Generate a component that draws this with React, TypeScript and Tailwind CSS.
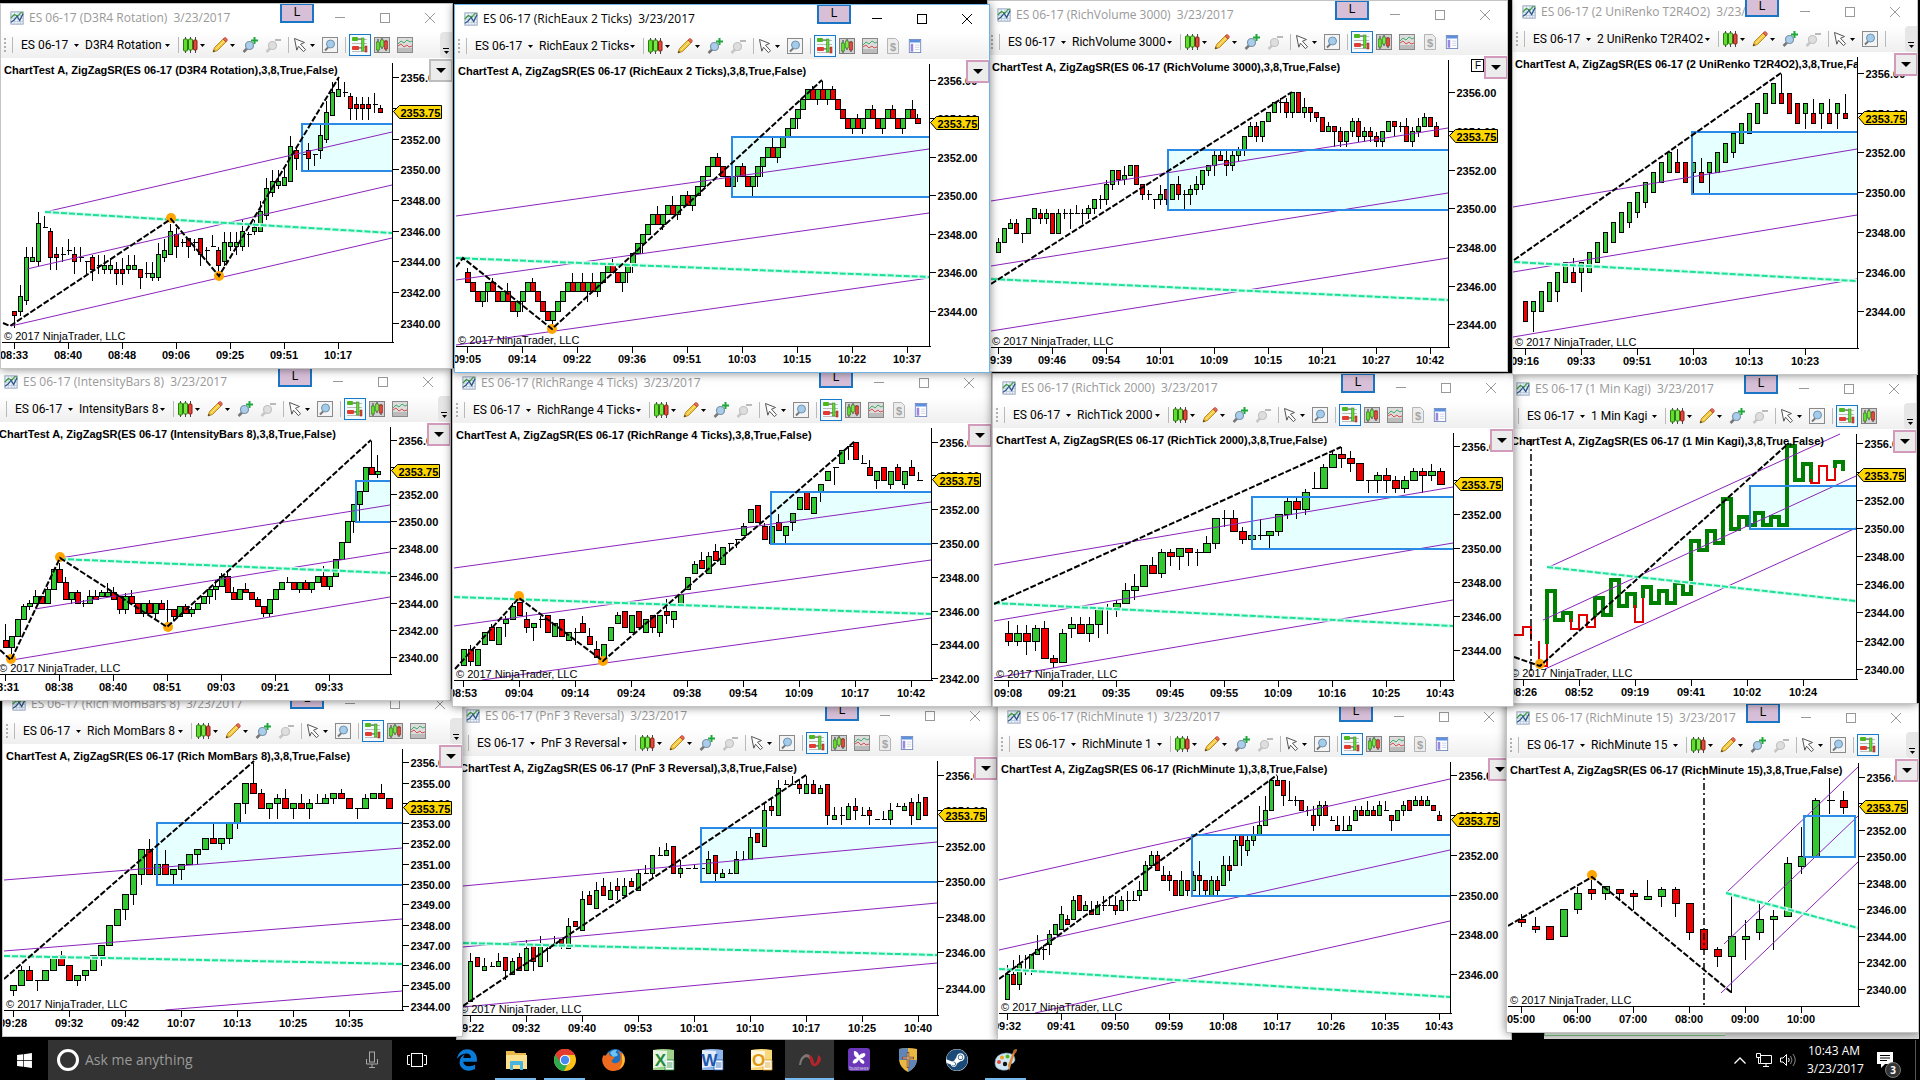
import type { ReactNode } from "react";
import { FaEdgeLegacy, FaSteam, FaWindows } from "react-icons/fa";

type Line = [number, number, number, number];
type Point = [number, number];

interface Kagi {
  up: boolean;
  col: number;
  levels: number[];
}

interface ChartWindow {
  name: string;
  labelWidth: number;
  left: number;
  top: number;
  right: number;
  bottom: number;
  z: number;
  active?: boolean;
  fixed?: boolean;
  overflow?: boolean;
  tools: number;
  // plot area, all in desktop pixels
  plotLeft: number;
  axisX: number;
  axisY: number;
  captionX: number;
  // y of price 2340 and height of one point
  baseY: number;
  point: number;
  prices: number[];
  x0: number;
  step: number;
  every: number;
  body: number;
  times: string[];
  bars: string;
  kagi?: Kagi[];
  trend: Line[];
  mid: Line;
  zigzag: Point[];
  dots: Point[];
  zone: Line;
  zoneClosed?: boolean;
  session?: number;
}

const EVEN = [2356, 2354, 2352, 2350, 2348, 2346, 2344];

// Bars are written in ticks above 2340: "open close hHigh lLow", a single number is a doji.
const WINDOWS: ChartWindow[] = [
  {
    name: "D3R4 Rotation", labelWidth: 75, left: 0, top: 3, right: 453, bottom: 369, z: 8, tools: 3, overflow: true,
    plotLeft: 2, axisX: 392, axisY: 342, captionX: 4, baseY: 322.7, point: 15.35, prices: [...EVEN, 2342, 2340],
    x0: 14, step: 6, every: 9, body: 5,
    times: ["08:33", "08:40", "08:48", "09:06", "09:25", "09:51", "10:17"],
    bars: "3 2 l-1, 3 7 h10 l2, 6 17 h20 l5, 16 17 h20, 16 26 h29 l15, 25 h28, 24 17 h25 l14, 18 17 h20 l14, 18 h20 l16, 19 h22 l18, 18 16 h20 l13, 17 h20 l16, 16 l13, 17 14 h18 l11, 15 h18 l13, 14 15 h18 l13, 14 15 h17 l13, 14 13 h16 l10, 14 13 h17 l10, 14 15 h18 l13, 14 15 h18, 14 12 l9, 13 h16 l12, 12 13 h16 l11, 12 18 h21 l11, 17 19 h22 l16, 18 24 h26, 23 20 h25 l17, 21 h22 l20, 22 20 l17, 21 h22 l19, 22 18 l15, 19 h20 l16, 20 h23, 19 15 h20 l12, 16 21 h24 l15, 20 21 h24 l19, 20 21 h24 l18, 20 24 h27 l19, 23 h24 l20, 24 25 h27 l23, 24 29 h32, 28 35 h38 l27, 34 37 h40 l33, 36 37 h40 l35, 36 38 h41, 37 46 h49, 45 43 h46 l40, 44 h46, 45 43 h47 l40, 44 l41, 45 49 h52 l43, 48 55 h58 l47, 54 60 h63, 59 61 h64, 60 h63 l59, 59 56 h60 l53, 57 56 h59 l53, 57 56 h59 l53, 57 56 h59 l53, 57 h60 l55, 56 55 h57",
    trend: [[45, 212, 392, 132], [27, 269, 392, 185], [11, 326, 392, 238]],
    mid: [45, 212, 392, 233],
    zigzag: [[3, 323], [10, 326], [171, 219], [219, 276], [339, 77]],
    dots: [[171, 218], [219, 276]], zone: [302, 124, 392, 171],
  },
  {
    name: "RichEaux 2 Ticks", labelWidth: 86, left: 454, top: 4, right: 990, bottom: 373, z: 9, active: true, tools: 5,
    plotLeft: 456, axisX: 929, axisY: 346, captionX: 458, baseY: 387.7, point: 19.25, prices: EVEN,
    x0: 467, step: 5, every: 11, body: 6,
    times: ["09:05", "09:14", "09:22", "09:36", "09:51", "10:03", "10:15", "10:22", "10:37"],
    bars: "24 22 h25, 22 20, 20 18, 18 20 l17, 20 22 l18, 22 20 h23, 20 18, 18 20, 20 18 h22, 18 16, 16 18 l15, 18 20 l16, 20 22, 22 20 h23, 20 18, 18 16, 16 14, 14 16 l13, 16 18, 18 20, 20 22, 22 20 h24, 20 22, 22 20 h24, 20 22 l18, 22 20 h24, 20 22 l19, 22 24, 24 26, 26 24 h27, 24 22, 22 24 l20, 24 26 l22, 26 28 l24, 28 30, 30 32 l28, 32 34, 34 36, 36 34 h38, 34 36 l33, 36 38, 38 36 h40, 36 38 l35, 38 40, 40 38 h41, 38 40 l37, 40 42, 42 44, 44 46, 46 48, 48 46 h49, 46 44, 44 42, 42 44, 44 46 l43, 46 44 h47, 44 42, 42 44 l40, 44 46 l42, 46 48 l44, 48 50, 50 48 h52, 48 50 l47, 50 52, 52 54, 54 56, 56 58 l54, 58 60, 60 62, 62 60 h63, 60 62 l59, 62 60 h64, 60 62 l59, 62 60 h63, 60 58, 58 56, 56 54, 54 56 l53, 56 54 h57, 54 56 l53, 56 58, 58 56 h59, 56 54, 54 56 l53, 56 58, 58 56 h59, 56 54, 54 56 l53, 56 58, 58 56 h60, 56 55 h57",
    trend: [[456, 216, 929, 149], [456, 280, 929, 213], [456, 345, 929, 278]],
    mid: [456, 258, 929, 277],
    zigzag: [[456, 267], [463, 258], [552, 329], [822, 80]],
    dots: [[552, 329]], zone: [732, 137, 929, 197],
  },
  {
    name: "RichVolume 3000", labelWidth: 90, left: 987, top: 0, right: 1508, bottom: 372, z: 7, tools: 5, fixed: true,
    plotLeft: 991, axisX: 1448, axisY: 347, captionX: 992, baseY: 401.7, point: 19.33, prices: EVEN,
    x0: 998, step: 6, every: 9, body: 5,
    times: ["09:39", "09:46", "09:54", "10:01", "10:09", "10:15", "10:21", "10:27", "10:42"],
    bars: "31 33 h34, 33 36, 36 37 h38, 37 35 h38, 35 l33, 35 38, 38 40, 39 38 h40 l37, 38 39 h40 l37, 39 35, 35 39 h40, 39 h40 l38, 39 h40 l36, 39 h41, 39 h40 l37, 39 40 h41 l38, 40 42 l39, 42 h43 l40, 42 45 h46 l41, 45 48 l44, 48 46 l45, 46 47 h49 l45, 47 49, 49 45, 45 43 l42, 43 h44 l42, 42 l40, 42 43 h45 l41, 44 42 l41, 42 45, 45 43 h47 l42, 43 h44 l40, 43 44 h45 l41, 44 45 h47 l43, 45 48 l44, 48 49 l47, 49 51 h52 l47, 51 50 h52, 50 49 h52 l47, 49 51 h52 l48, 51 52 h53 l50, 52 55 l51, 55 57 h58, 57 55 h58 l54, 55 58 l54, 58 60, 60 62, 62 h63 l60, 62 60 h63 l59, 60 64 l59, 64 60, 60 61 h63 l59, 61 60 l58, 60 59 l58, 59 56, 56 57 h58, 57 56 l53, 56 54 h57 l53, 54 56 l53, 56 58 h59 l55, 58 55 h59 l54, 55 56 h57 l54, 56 55 h57 l54, 55 54 h56 l53, 54 56 l53, 56 58, 58 57 l55, 57 h58 l56, 57 54 h59, 54 56 h57 l53, 56 57 h59 l55, 57 59 h60, 59 57, 57 55 h58",
    trend: [[991, 201, 1448, 128], [991, 266, 1448, 193], [991, 331, 1448, 258]],
    mid: [991, 279, 1448, 300],
    zigzag: [[991, 284], [1292, 92]],
    dots: [], zone: [1168, 150, 1448, 210],
  },
  {
    name: "2 UniRenko T2R4O2", labelWidth: 103, left: 1512, top: -3, right: 1918, bottom: 375, z: 6, tools: 0, overflow: true,
    plotLeft: 1513, axisX: 1857, axisY: 348, captionX: 1515, baseY: 390.7, point: 19.85, prices: EVEN,
    x0: 1525, step: 8, every: 7, body: 5,
    times: ["09:16", "09:33", "09:51", "10:03", "10:13", "10:23"],
    bars: "18 14, 16 18 l12, 16 20, 18 22, 20 24 l18, 22 26, 24 22 h27, 24 26 l20, 24 28, 26 30, 28 32, 30 34, 32 36, 34 38 l33, 36 40 l35, 38 42 l37, 40 44, 42 46, 44 48, 46 44 h49, 46 42, 44 46 l40, 44 42 h47, 44 46 l40, 44 48, 46 50, 48 52 l47, 50 54, 52 56, 54 58, 56 60, 58 62, 60 58 h64, 60 56, 58 54, 56 58 l53, 56 54 h59, 56 58 l53, 56 54 h59, 56 58 l53, 56 55 h60",
    trend: [[1513, 207, 1857, 149], [1513, 272, 1857, 215], [1513, 337, 1857, 279]],
    mid: [1514, 262, 1857, 281],
    zigzag: [[1514, 260], [1781, 73]],
    dots: [], zone: [1692, 132, 1857, 194],
  },
  {
    name: "IntensityBars 8", labelWidth: 76, left: -6, top: 367, right: 451, bottom: 701, z: 4, tools: 3, overflow: true,
    plotLeft: 0, axisX: 390, axisY: 674, captionX: -1, baseY: 656.7, point: 13.53, prices: [...EVEN, 2342, 2340],
    x0: 5, step: 6, every: 9, body: 6,
    times: ["08:31", "08:38", "08:40", "08:51", "09:03", "09:21", "09:33"],
    bars: "5 3 h10, 3 6 l1, 6 11, 11 15 h16, 15 16 h17 l14, 16 18 h20, 18 16, 16 20 h21, 20 26, 26 22 h28, 22 17 h24, 17 19 l16, 19 16 h20, 16 h17 l15, 16 18 h20, 18 17 h20, 18 19 h20, 18 19 h22, 19 17 h21, 18 14 l13, 14 18 h19 l13, 18 16 h20, 16 13, 13 16 l12, 16 13 h17, 13 16 l11, 16 14 h17, 14 h17 l10, 14 12 l11, 12 15, 15 13 h16, 13 14 h15 l12, 14 16, 16 18, 18 20 l16, 20 21 h23 l17, 21 24 h25, 24 19 h26, 19 17 h21, 17 20, 20 19 h22, 19 17, 17 15 h18, 15 13 l12, 13 17 l12, 17 20, 20 22, 22 h24, 22 20, 20 22 l19, 22 20 h23, 20 22 l19, 22 24, 24 21 h27, 21 24 l20, 24 29, 29 34, 34 40, 40 45 l37, 45 49 l40, 49 56, 56 54 h64, 54 55 h60 l53",
    trend: [[60, 558, 390, 505], [35, 609, 390, 552], [12, 660, 390, 597]],
    mid: [60, 559, 390, 573],
    zigzag: [[0, 650], [11, 660], [60, 558], [167, 627], [371, 440]],
    dots: [[11, 659], [60, 557], [168, 627]], zone: [356, 481, 390, 522],
  },
  {
    name: "RichRange 4 Ticks", labelWidth: 94, left: 452, top: 368, right: 992, bottom: 707, z: 5, tools: 5,
    plotLeft: 454, axisX: 931, axisY: 680, captionX: 456, baseY: 711.8, point: 16.88, prices: [...EVEN, 2342],
    x0: 463, step: 7, every: 8, body: 6,
    times: ["08:53", "09:04", "09:14", "09:24", "09:38", "09:54", "10:09", "10:17", "10:42"],
    bars: "11 15, 15 12 h16 l11, 11 15, 16 19, 20 17 h21, 16 20, 21 22 h23 l18, 22 25 h26, 26 23, 22 20 h24 l19, 20 21 l17, 22 h23 l20, 23 19, 18 21, 22 18, 17 19, 19 h20 l16, 21 19 h23, 18 16 h20, 15 13 h17, 13 16 l12, 17 20, 21 23 h24, 24 20, 19 23, 24 20, 19 22, 23 20 l19, 19 23 l18, 24 23 h27 l21, 22 24 l20, 25 28, 29 32, 33 35 h36, 36 34 h38, 33 37 h38, 38 36 h40, 35 39, 40 l38, 41 l39, 42 44 h45, 45 48, 49 45, 44 41 h45, 40 44, 45 43 h47, 42 44 l40, 45 47 l43, 48 51, 52 48, 47 51, 52 54 l50, 55 57, 58 l54, 59 62, 63 l60, 64 60, 59 h61, 58 56 h60, 55 57 l53, 58 55, 54 57 l53, 58 55 h59, 54 57 l53, 58 56 h60, 55 h57",
    trend: [[454, 568, 931, 502], [454, 626, 931, 560], [482, 680, 931, 618]],
    mid: [454, 597, 931, 614],
    zigzag: [[455, 669], [519, 598], [603, 661], [855, 441]],
    dots: [[519, 596], [603, 661]], zone: [771, 492, 931, 544],
  },
  {
    name: "RichTick 2000", labelWidth: 73, left: 992, top: 373, right: 1514, bottom: 707, z: 5, tools: 5,
    plotLeft: 994, axisX: 1453, axisY: 680, captionX: 996, baseY: 717.7, point: 17, prices: EVEN,
    x0: 1008, step: 9, every: 6, body: 8,
    times: ["09:08", "09:21", "09:35", "09:45", "09:55", "10:09", "10:16", "10:25", "10:43"],
    bars: "20 18 h23 l17, 18 20 h22 l17, 20 18 h22 l15, 18 21 h22 l16, 21 14 h23, 14 13 h15 l12, 13 20 h21, 21 22 h24 l19, 22 20 h24, 20 22 h24 l18, 22 26 l19, 26 h27 l20, 26 27 h28 l24, 27 30 h32, 30 31 h34 l28, 31 36, 36 34 h38, 34 39 h40 l33, 39 38 h40 l36, 38 40 l35, 40 39 l36, 39 h40 l36, 39 41 h43, 41 47 l40, 47 h49 l45, 47 44 h49, 44 42 h45 l41, 42 43 h45, 43 h47 l42, 43 44 l40, 44 48 l43, 48 51 h52 l47, 51 49 h52 l47, 49 53 h54 l48, 54 h58, 54 59 h60, 59 62 h63, 62 61 h64 l59, 61 60 h63 l58, 60 56, 56 l53, 56 57 h58 l53, 57 56 h59 l53, 56 54 h57 l53, 54 56 h57 l53, 56 58 h59, 58 57 h59 l53, 57 58 h60 l56, 58 55 h59",
    trend: [[994, 565, 1453, 487], [994, 621, 1453, 543], [994, 678, 1453, 600]],
    mid: [994, 603, 1453, 626],
    zigzag: [[994, 604], [1341, 447]],
    dots: [], zone: [1252, 497, 1453, 549],
  },
  {
    name: "1 Min Kagi", labelWidth: 56, left: 1506, top: 374, right: 1917, bottom: 704, z: 4, tools: 2, overflow: true,
    plotLeft: 1514, axisX: 1856, axisY: 679, captionX: 1511, baseY: 668.7, point: 14.08, prices: [...EVEN, 2342, 2340],
    x0: 1523, step: 8, every: 7, body: 5,
    times: ["08:26", "08:52", "09:19", "09:41", "10:02", "10:24"],
    bars: "",
    kagi: [
      { up: false, col: -1, levels: [10, 10, 12, 9] },
      { up: false, col: 2, levels: [8, 1, 8] },
      { up: true, col: 3, levels: [8, 22.5, 14, 16, 14] },
      { up: false, col: 6, levels: [14, 11.5, 15.5, 12, 15.5] },
      { up: true, col: 9, levels: [15.5, 20.5, 15.5, 25.5, 18, 21.5, 18] },
      { up: false, col: 14, levels: [18, 13.5, 21] },
      { up: true, col: 15, levels: [21, 23.5, 19, 22.5, 19, 24.5, 21.5, 36.5, 34, 39.5, 36, 48.5, 40, 43.5, 41, 44.5, 41, 43.5, 41, 63.5, 54, 58.5, 54] },
      { up: false, col: 36, levels: [54, 53, 58, 54, 58] },
      { up: true, col: 39, levels: [58, 59, 57] },
    ],
    trend: [[1549, 567, 1840, 434], [1543, 620, 1856, 476], [1545, 669, 1856, 528]],
    mid: [1547, 567, 1856, 601],
    zigzag: [[1514, 657], [1540, 666], [1789, 443]],
    dots: [[1540, 664]], zone: [1750, 486, 1856, 529], session: 1531,
  },
  {
    name: "Rich MomBars 8", labelWidth: 86, left: 2, top: 689, right: 463, bottom: 1037, z: 3, tools: 3, overflow: true,
    plotLeft: 4, axisX: 402, axisY: 1010, captionX: 6, baseY: 1086.7, point: 20.27,
    prices: [2356, 2355, 2354, 2353, 2352, 2351, 2350, 2349, 2348, 2347, 2346, 2345, 2344],
    x0: 13, step: 8, every: 7, body: 7,
    times: ["09:28", "09:32", "09:42", "10:07", "10:13", "10:25", "10:35"],
    bars: "19 20 l18, 20 23 h24, 23 21 h24, 21 l19, 21 23, 23 26, 26 24 h27, 24 21, 21 22 l20, 22 23 l21, 23 26, 26 28 l24, 28 32, 32 35, 35 38 l33, 38 42 l36, 42 47 l40, 47 42 h49, 42 44, 44 42 h47, 42 43 l40, 43 44 l41, 44 46, 46 47 l44, 47 49, 49 48 h52, 48 49 l47, 49 52 l48, 52 56 l51, 56 60 l54, 60 58 h64, 58 55 h59, 55 56 l53, 56 57 h58 l53, 57 55 h59, 55 56 l53, 56 55 h58, 55 56 h57 l53, 56 h58, 56 57 h58, 57 58 l56, 58 57 h59, 57 55, 55 l53, 55 57 h58, 57 58, 58 57 h60, 57 55",
    trend: [[4, 880, 402, 848], [4, 951, 402, 919], [165, 1010, 402, 991]],
    mid: [4, 956, 402, 964],
    zigzag: [[4, 979], [254, 761]],
    dots: [], zone: [157, 823, 402, 885],
  },
  {
    name: "PnF 3 Reversal", labelWidth: 76, left: 456, top: 701, right: 998, bottom: 1040, z: 1, tools: 5,
    plotLeft: 463, axisX: 937, axisY: 1015, captionX: 460, baseY: 1058.7, point: 17.73, prices: EVEN,
    x0: 470, step: 7, every: 8, body: 5,
    times: ["09:22", "09:32", "09:40", "09:53", "10:01", "10:10", "10:17", "10:25", "10:40"],
    bars: "13 22 h24, 23 21, 20 21 h23, 21 h22, 21 22 h24, 23 20 l18, 19 22 h23, 23 20 h24, 20 25 h27, 26 22 l20, 21 26 h28, 25 h26 l22, 26 h28, 27 26 l25, 25 30 h32, 31 30, 29 36 h38, 37 35 h38, 34 38 h40, 39 37 h41, 36 38 h40, 39 38 h41 l36, 37 39 h41, 40 39 h41, 38 42 h43, 42 h44, 42 46 l41, 46 h48, 46 47 h49, 48 42, 42 43 h45 l41, 43, 43 h44, 43 h44, 42 45 h47, 46 42 l40, 41 42 h43, 42 h43, 42 45 h47, 45 h47, 45 50 h52, 51 49, 48 56 h58, 57 56 h59 l55, 55 61 h63, 62 h63, 62 h64, 62 61 h63 l60, 60 62 h64, 62 60 h63, 60 61 h62, 62 55 l53, 54 55 h57, 55 h57 l53, 54 57 h58, 57 56 h59 l54, 55 h57, 56 55 h57 l53, 54, 54 h56, 54 56 h58 l53, 57 h58, 56 57 h58, 58 55 h59 l53, 54 58 h60, 59 55",
    trend: [[463, 886, 937, 842], [463, 947, 937, 903], [463, 1007, 937, 963]],
    mid: [463, 943, 937, 955],
    zigzag: [[463, 1006], [806, 775]],
    dots: [], zone: [701, 828, 937, 882],
  },
  {
    name: "RichMinute 1", labelWidth: 70, left: 997, top: 702, right: 1512, bottom: 1040, z: 2, tools: 5,
    plotLeft: 999, axisX: 1450, axisY: 1013, captionX: 1001, baseY: 1093.3, point: 19.87, prices: [2356, 2354, 2352, 2350, 2348, 2346],
    x0: 1007, step: 6, every: 9, body: 5,
    times: ["09:32", "09:41", "09:50", "09:59", "10:08", "10:17", "10:26", "10:35", "10:43"],
    bars: "19 24 h26, 24 22 h27, 22 26 h28 l21, 25 h28 l24, 25 28 l24, 28 29 h32, 29 h30 l27, 30 32 h33 l28, 32 34, 33 36 h38, 35 34 h36, 35 39 h40, 40 37, 37 38 h39, 37 36 h39, 36 38 h39, 38 h40 l37, 38 h40, 38 37 h40 l36, 37 39 h40, 39 h41 l37, 39 h41, 40 41 h43 l39, 41 46 h47, 46 48 h49, 48 45 h49, 44 43 h46, 44 43 h45 l41, 43 40, 40 43 h45, 43 41 l40, 41 44 h45, 44 43 h47 l40, 43 41 l40, 40 43 h44, 43 41 h44 l40, 42 46 h48, 46 45 h48 l43, 46 51 h52, 52 50 l46, 49 51 h52 l48, 51 52 h54 l50, 52 54 h58, 54 57 h60, 57 63, 63 62 h64, 63 60 l58, 59 h63, 59 h60 l58, 59 57, 57 h58 l56, 56 54 h58 l53, 56 58 h59 l54, 58 56 h59, 55 h56, 54 53 h56, 53 h56, 53 54 h56, 55 57 h58, 57 56 h58, 56 57 h59, 57 56 h58, 56 58 h59, 57 h59, 56 55 l53, 55 57, 57 58 h59 l56, 59 57, 58 59 h60, 59 58 h60, 58 59 h60, 58 57, 56 55 h57",
    trend: [[999, 880, 1450, 779], [999, 950, 1450, 850], [1035, 1013, 1450, 921]],
    mid: [999, 969, 1450, 997],
    zigzag: [[999, 979], [1277, 775]],
    dots: [], zone: [1192, 835, 1450, 896],
  },
  {
    name: "RichMinute 15", labelWidth: 77, left: 1506, top: 703, right: 1919, bottom: 1033, z: 3, tools: 1, overflow: true,
    plotLeft: 1508, axisX: 1858, axisY: 1006, captionX: 1510, baseY: 988.7, point: 13.25, prices: [...EVEN, 2342, 2340],
    x0: 1521, step: 14, every: 4, body: 8,
    times: ["05:00", "06:00", "07:00", "08:00", "09:00", "10:00"],
    bars: "21 20 h23 l19, 19 18 h22 l17, 19 15, 16 24, 24 29 h31 l23, 30 29 h33 l27, 29 31 l27, 30 29 l27, 29 28 h30 l24, 27 28 h33, 28 30 h31 l25, 30 26 h31 l22, 26 17 l15, 18 12, 12 10 h13 l7, 10 16 h29 l-1, 15 16 h21 l9, 17 21 h27 l15, 21 22 h24 l12, 22 38 h40, 37 40 h49 l35, 40 57 h58, 57 h64 l53, 57 55 h60 l53",
    trend: [[1726, 893, 1858, 767], [1724, 944, 1858, 816], [1721, 993, 1858, 862]],
    mid: [1726, 893, 1858, 928],
    zigzag: [[1508, 926], [1592, 877], [1732, 993]],
    dots: [[1592, 875]], zone: [1804, 816, 1855, 857], zoneClosed: true, session: 1704,
  },
];

function parseBars(bars: string) {
  if (!bars) return [];
  return bars.split(", ").map((bar) => {
    const parts = bar.split(" ");
    const body = parts.filter((p) => !/^[hl]/.test(p)).map(Number);
    const open = body[0];
    const close = body.length > 1 ? body[1] : open;
    const high = parts.find((p) => p[0] === "h");
    const low = parts.find((p) => p[0] === "l");
    return {
      open,
      close,
      high: high ? Number(high.slice(1)) : Math.max(open, close),
      low: low ? Number(low.slice(1)) : Math.min(open, close),
    };
  });
}

function Chart({ win }: { win: ChartWindow }) {
  const top = win.top + 55;
  const left = win.left + 1;
  const width = win.right - 1 - left;
  const height = win.bottom - 1 - top;
  const y = (ticks: number) => Math.round(win.baseY - (ticks * win.point) / 4) + 0.5;
  const ax = win.axisX + 0.5;
  const ay = win.axisY + 0.5;
  const tagY = y(55) - 1;
  const clip = `plot-${win.name.replace(/\s/g, "")}`;
  const [zx, zy, zx2, zy2] = win.zone;

  return (
    <svg
      width={width}
      height={height}
      viewBox={`${left} ${top} ${width} ${height}`}
      className="block shrink-0 font-['Liberation_Sans',Arial,sans-serif]"
      role="img"
      aria-label={`${win.name} price chart`}
    >
      <clipPath id={clip}>
        <rect x={win.plotLeft} y={top} width={win.axisX - win.plotLeft} height={win.axisY - top} />
      </clipPath>
      <g clipPath={`url(#${clip})`}>
        <rect x={zx} y={zy} width={zx2 - zx} height={zy2 - zy} fill="#e6ffff" />
        <g shapeRendering="crispEdges">
          {parseBars(win.bars).map((bar, i) => {
            const cx = Math.round(win.x0 + i * win.step) + 0.5;
            const x = cx - Math.floor((win.body - 1) / 2);
            const hi = y(Math.max(bar.open, bar.close));
            const lo = y(Math.min(bar.open, bar.close));
            return (
              <g key={i} stroke="#000">
                <line x1={cx} x2={cx} y1={y(bar.high)} y2={y(bar.low)} />
                {bar.open === bar.close ? (
                  <line x1={x} x2={x + win.body} y1={hi} y2={hi} />
                ) : (
                  <rect x={x} y={hi} width={win.body - 1} height={lo - hi} fill={bar.close > bar.open ? "#32c832" : "#f00000"} />
                )}
              </g>
            );
          })}
          {win.kagi?.map((leg, i) => {
            const points: string[] = [];
            leg.levels.forEach((level, n) => {
              const x = win.x0 + (leg.col + n) * win.step;
              if (n > 0) points.push(`${x - win.step},${y(level)}`);
              if (n < leg.levels.length - 1) points.push(`${x},${y(level)}`);
            });
            return (
              <polyline
                key={i}
                points={points.join(" ")}
                fill="none"
                stroke={leg.up ? "#008000" : "#e00000"}
                strokeWidth={leg.up ? 4 : 2}
                strokeLinecap="square"
              />
            );
          })}
        </g>
        {win.trend.map(([x1, y1, x2, y2]) => (
          <line key={y2} x1={x1} y1={y1} x2={x2} y2={y2} stroke="#8a24bc" />
        ))}
        <path
          d={win.zoneClosed ? `M${zx} ${zy}H${zx2}V${zy2}H${zx}Z` : `M${zx2 + 4} ${zy}H${zx}V${zy2}H${zx2 + 4}`}
          fill="none"
          stroke="#2b8ae6"
          strokeWidth="2"
        />
        <line x1={win.mid[0]} y1={win.mid[1]} x2={win.mid[2]} y2={win.mid[3]} stroke="#d9fbf0" strokeWidth="4" />
        <line x1={win.mid[0]} y1={win.mid[1]} x2={win.mid[2]} y2={win.mid[3]} stroke="#1be096" strokeWidth="2" strokeDasharray="6 2" />
        {win.dots.map(([cx, cy]) => (
          <circle key={cx} cx={cx} cy={cy} r="5" fill="#ffa500" />
        ))}
        <polyline points={win.zigzag.map((p) => p.join(",")).join(" ")} fill="none" stroke="#000" strokeWidth="2" strokeDasharray="6 2" />
        {win.session && (
          <line x1={win.session} x2={win.session} y1={top + 10} y2={win.axisY} stroke="#000" strokeWidth="1.5" strokeDasharray="7 3 2 3" />
        )}
      </g>

      <g fill="#000" fontSize="11">
        <clipPath id={`${clip}-cap`}>
          <rect x={left} y={top} width={win.axisX - left} height={height} />
        </clipPath>
        <text x={win.captionX} y={top + 16} fontWeight="bold" clipPath={`url(#${clip}-cap)`}>
          {`ChartTest A, ZigZagSR(ES 06-17 (${win.name}),3,8,True,False)`}
        </text>
        <text x={win.captionX} y={win.axisY - 2}>© 2017 NinjaTrader, LLC</text>
      </g>

      <g stroke="#000" shapeRendering="crispEdges">
        <line x1={ax} x2={ax} y1={top + 5} y2={ay} />
        <line x1={win.plotLeft} x2={ax + 1} y1={ay} y2={ay} />
        {win.prices.map((p) => (
          <line key={p} x1={ax} x2={ax + 6} y1={y((p - 2340) * 4)} y2={y((p - 2340) * 4)} />
        ))}
        {win.times.map((t, i) => (
          <line key={t} x1={win.x0 + i * win.every * win.step + 0.5} x2={win.x0 + i * win.every * win.step + 0.5} y1={ay} y2={ay + 6} />
        ))}
      </g>
      <g fill="#000" fontSize="11" fontWeight="bold">
        {win.prices.map((p) => (
          <text key={p} x={ax + 8} y={y((p - 2340) * 4) + 4}>{p.toFixed(2)}</text>
        ))}
        {win.times.map((t, i) => (
          <text key={t} x={win.x0 + i * win.every * win.step} y={ay + 16} textAnchor="middle">{t}</text>
        ))}
        <path
          d={`M${ax + 1} ${tagY}L${ax + 7} ${tagY - 6}H${ax + 49}V${tagY + 7}H${ax + 7}Z`}
          fill="#ffd700"
          stroke="#000"
        />
        <text x={ax + 8} y={tagY + 5}>2353.75</text>
      </g>
      {win.fixed && (
        <g>
          <rect x={win.right - 36.5} y={top + 4.5} width="12" height="12" fill="#fff" stroke="#000" />
          <text x={win.right - 33} y={top + 14} fontSize="10">F</text>
        </g>
      )}
    </svg>
  );
}

/* ---------- toolbar icons ---------- */

function Icon({ children, className = "size-4" }: { children: ReactNode; className?: string }) {
  return (
    <svg viewBox="0 0 16 16" className={`shrink-0 ${className}`} aria-hidden="true">
      {children}
    </svg>
  );
}

const Caret = () => (
  <svg viewBox="0 0 5 3" className="h-[3px] w-[5px] shrink-0" aria-hidden="true">
    <path d="M0 0h5L2.500 3z" fill="#000" />
  </svg>
);

const CandlesIcon = () => (
  <Icon>
    <path d="M3.500 0v16M8.500 0v16M13.500 0v16" stroke="#444" />
    <rect x="1.500" y="2" width="4" height="12" rx="1" fill="#5fdc2c" stroke="#2c7a12" />
    <rect x="6.500" y="2" width="4" height="11" rx="1" fill="#7be84a" stroke="#2c7a12" />
    <rect x="11.500" y="3" width="3.500" height="10" rx="1" fill="#e04a3c" stroke="#8c1a12" />
  </Icon>
);

const PencilIcon = () => (
  <Icon>
    <path d="M1 15l1.500-4.500L11 2l3 3-8.500 8.500z" fill="#f5c63a" stroke="#a87a14" strokeWidth=".8" />
    <path d="M11 2l1.200-1.200q1.300-.6 2.400.6t.5 2.500L14 5z" fill="#e8694f" stroke="#a33" strokeWidth=".6" />
    <path d="M1 15l.7-2.200 1.600 1.500z" fill="#333" />
    <path d="M4 12l8-8" stroke="#fdeaa0" strokeWidth="1" />
  </Icon>
);

const ZoomInIcon = () => (
  <Icon>
    <path d="M6 10.500L1.500 15" stroke="#777" strokeWidth="2.500" />
    <circle cx="7.500" cy="8.500" r="4" fill="#a9cdea" stroke="#7b93a8" strokeWidth="1.200" />
    <path d="M12.500 0v7M9 3.500h7" stroke="#1ea83c" strokeWidth="2" />
  </Icon>
);

const ZoomOutIcon = () => (
  <Icon>
    <path d="M6 10.500L1.500 15" stroke="#c6c6c6" strokeWidth="2.500" />
    <circle cx="7.500" cy="8.500" r="4" fill="#dedede" stroke="#c2c2c2" strokeWidth="1.200" />
    <path d="M10 3h6" stroke="#b9b9b9" strokeWidth="2" />
  </Icon>
);

const CursorIcon = () => (
  <Icon>
    <path d="M2.500 1.500l10 4-4 1.700 5 5.500-2 2-5-5.500-1.700 4z" fill="#fff" stroke="#555" />
  </Icon>
);

const PageZoomIcon = () => (
  <Icon>
    <rect x=".5" y=".5" width="15" height="15" fill="#f4f4f4" stroke="#8a8a8a" />
    <path d="M7 9.500L3 13.500" stroke="#777" strokeWidth="2" />
    <circle cx="8.500" cy="7" r="4" fill="#a4cbea" stroke="#6f93b0" />
  </Icon>
);

const DataBoxIcon = () => (
  <Icon>
    <path d="M0 2.500h15M0 6.500h15M0 10.500h15M0 14.500h15" stroke="#bbb" />
    <rect x="0" y="0" width="6" height="4" rx="1" fill="#4cb81c" />
    <rect x="0" y="9" width="7" height="4" rx="1" fill="#e03c30" />
    <path d="M6 2h3M7 11h3" stroke="#555" />
    <rect x="9.500" y="1" width="2.500" height="13" fill="#5fdc2c" stroke="#2c7a12" strokeWidth=".5" />
    <rect x="13" y="9" width="2" height="6" fill="#e04a3c" stroke="#8c1a12" strokeWidth=".5" />
  </Icon>
);

const ChartBarsIcon = () => (
  <Icon>
    <rect x=".5" y=".5" width="15" height="15" fill="#d2d2d2" stroke="#808080" />
    <path d="M4 2v13M8 1v11M12 3v11" stroke="#333" />
    <rect x="2.500" y="5" width="3" height="8" fill="#5fdc2c" stroke="#2c7a12" strokeWidth=".6" />
    <rect x="6.500" y="3" width="3" height="7" fill="#7be84a" stroke="#2c7a12" strokeWidth=".6" />
    <rect x="10.500" y="4" width="3" height="8" fill="#e04a3c" stroke="#8c1a12" strokeWidth=".6" />
  </Icon>
);

const IndicatorIcon = () => (
  <Icon>
    <rect x=".5" y=".5" width="15" height="15" fill="#dcdcdc" stroke="#8a8a8a" />
    <path d="M1 11h14v4H1z" fill="#bcbcbc" />
    <path d="M1 7l3-3 3 2 3-3 3 2 2-1" fill="none" stroke="#3fae6a" />
    <path d="M1 9l3-2 3 3 3-2 2 2 3-1" fill="none" stroke="#d85050" />
  </Icon>
);

const DollarIcon = () => (
  <Icon>
    <path d="M2.500.5h8l3 3v12h-11z" fill="#ececec" stroke="#b5b5b5" />
    <text x="8" y="12.500" textAnchor="middle" fontSize="11" fontWeight="bold" fill="#a5a5a5" className="font-['Liberation_Sans',sans-serif]">$</text>
  </Icon>
);

const PropertiesIcon = () => (
  <Icon className="h-4 w-3.5">
    <rect x="1.500" y=".5" width="13" height="15" fill="#fff" stroke="#6f86b8" />
    <path d="M2 1h12v3H2z" fill="#5b8fe0" />
    <path d="M3 5.500h3v9H3z" fill="#9a88e0" />
    <path d="M8 7h5M8 9.500h5M8 12h5" stroke="#c8d2e2" />
  </Icon>
);

const LogoIcon = () => (
  <Icon className="h-3.5 w-4">
    <rect x="1" y="1" width="14" height="14" fill="#eef3fa" stroke="#8a9bb5" />
    <path d="M1 5h14M1 8.500h14M1 12h14M5 1v14M9 1v14M12 1v14" stroke="#a9bdd9" strokeWidth=".7" />
    <path d="M1 8l4-4 4 2 3-4h3" fill="none" stroke="#3a9a3a" strokeWidth="1.400" />
    <path d="M1 13l4-3 3-4 3 5 4-8" fill="none" stroke="#23517f" strokeWidth="1.300" />
  </Icon>
);

const Separator = () => <span className="h-4 w-px shrink-0 bg-[#b9b9b9]" />;

function ToolButton({ label, caret, children }: { label: string; caret?: boolean; children: ReactNode }) {
  return (
    <button type="button" aria-label={label} className={`flex shrink-0 items-center gap-0.5 ${caret ? "w-[23px]" : "w-4"}`}>
      {children}
      {caret && <Caret />}
    </button>
  );
}

function Combo({ label, value, width }: { label: string; value: string; width: number }) {
  return (
    <label className="relative flex shrink-0 items-center" style={{ width }}>
      <select
        aria-label={label}
        defaultValue={value}
        className="w-full cursor-default appearance-none bg-transparent font-[Roboto,sans-serif] text-xs leading-4 text-black"
      >
        <option>{value}</option>
      </select>
      <span className="pointer-events-none absolute right-1.5">
        <Caret />
      </span>
    </label>
  );
}

function Toolbar({ win }: { win: ChartWindow }) {
  const extra = [
    { label: "Chart bars", icon: <ChartBarsIcon /> },
    { label: "Indicators", icon: <IndicatorIcon /> },
    { label: "Strategies", icon: <DollarIcon /> },
    { label: "Properties", icon: <PropertiesIcon /> },
  ].slice(0, Math.max(0, win.tools - 1));

  return (
    <div className="relative flex h-[26px] shrink-0 items-center overflow-hidden bg-linear-to-b from-white to-[#efefef] pl-[3px]">
      <span className="mr-1.5 h-3.5 w-0 border-l-2 border-dotted border-[#b0b0b0]" />
      <Separator />
      <div className="ml-2 flex items-center">
        <Combo label="Instrument" value="ES 06-17" width={64} />
        <Combo label="Bar type" value={win.name} width={win.labelWidth + 16} />
      </div>
      <div className="ml-0.5 flex items-center gap-[7px]">
        <span className="-mr-1 flex"><Separator /></span>
        <ToolButton label="Chart style" caret><CandlesIcon /></ToolButton>
        <ToolButton label="Drawing tools" caret><PencilIcon /></ToolButton>
        <ToolButton label="Zoom in"><ZoomInIcon /></ToolButton>
        <ToolButton label="Zoom out"><ZoomOutIcon /></ToolButton>
        <span className="-mr-1 flex"><Separator /></span>
        <ToolButton label="Cursor" caret><CursorIcon /></ToolButton>
        <ToolButton label="Zoom window"><PageZoomIcon /></ToolButton>
        <span className="-mr-1 flex"><Separator /></span>
        {win.tools > 0 && (
          <button type="button" aria-label="Data series" className="-mr-1 flex size-[22px] shrink-0 items-center justify-center border border-[#1979ca] bg-[#f2f9ff]">
            <DataBoxIcon />
          </button>
        )}
        {extra.map((tool) => (
          <ToolButton key={tool.label} label={tool.label}>{tool.icon}</ToolButton>
        ))}
      </div>
      {win.overflow && (
        <button type="button" aria-label="More tools" className="absolute right-0 bottom-0 flex h-full w-3 flex-col items-center justify-end gap-0.5 rounded-l bg-[#e6e6e6] pb-1">
          <span className="h-px w-1.5 bg-black" />
          <Caret />
        </button>
      )}
    </div>
  );
}

function ChartPanel({ win }: { win: ChartWindow }) {
  return (
    <section
      className={`absolute flex flex-col overflow-hidden border bg-white shadow-[0_0_9px_rgba(0,0,0,0.5)] ${win.active ? "border-[#6fb4e8]" : "border-[#c4c4c4]"}`}
      style={{ left: win.left, top: win.top, width: win.right - win.left, height: win.bottom - win.top, zIndex: win.z }}
    >
      <header className={`-mt-px flex h-[29px] shrink-0 items-center pl-2 ${win.active ? "text-black" : "text-[#999]"}`}>
        <LogoIcon />
        <h2 className="ml-1 flex-1 whitespace-pre text-xs font-normal">{`ES 06-17 (${win.name})  3/23/2017`}</h2>
        <div className="mr-[15px] flex items-center gap-[31px]">
          <button type="button" aria-label="Minimize" className="flex size-3.5 items-center justify-center">
            <span className="h-px w-2.5 bg-current" />
          </button>
          <button type="button" aria-label="Maximize" className="flex size-3.5 items-center justify-center">
            <span className="size-2.5 border border-current" />
          </button>
          <button type="button" aria-label="Close" className="flex size-3.5 items-center justify-center">
            <svg viewBox="0 0 10 10" className="size-2.5">
              <path d="M0 0l10 10M10 0L0 10" stroke="currentColor" strokeWidth="1" />
            </svg>
          </button>
        </div>
      </header>
      <button
        type="button"
        className="absolute -top-px right-[138px] flex h-5 w-[34px] items-center justify-center border-2 border-[#1a75c4] bg-[#d8bfd8] pb-0.5 font-['Liberation_Sans',sans-serif] text-xs text-black"
      >
        L
      </button>
      <Toolbar win={win} />
      <Chart win={win} />
      <button
        type="button"
        aria-label="Chart menu"
        className={`absolute top-[55px] -right-px flex h-[23px] w-6 items-center justify-center border-2 bg-[#ececec] ${win.z === 8 ? "border-[#bdbdbd]" : "border-[#d29bbb]"}`}
      >
        <svg viewBox="0 0 10 5" className="h-[5px] w-2.5">
          <path d="M0 0h10L5 5z" fill="#000" />
        </svg>
      </button>
    </section>
  );
}

/* ---------- taskbar ---------- */

function AppIcon({ children }: { children: ReactNode }) {
  return (
    <svg viewBox="0 0 24 24" className="size-6" aria-hidden="true">
      {children}
    </svg>
  );
}

const OfficeIcon = ({ letter, color, light }: { letter: string; color: string; light: string }) => (
  <AppIcon>
    <path d="M2 2q10-2 21 0v20H2z" fill={light} />
    <path d="M14 12h9v10h-9z" fill="#fff" stroke={color} strokeWidth=".8" />
    <path d="M15.500 15h6M15.500 17h6M15.500 19h6" stroke={color} strokeWidth=".8" />
    <path d="M2 2l14 1v15L2 20z" fill="#fff" opacity=".75" />
    <text x="9.500" y="17.500" textAnchor="middle" fontSize="17" fontWeight="bold" fill={color} className="font-['Liberation_Sans',sans-serif]">{letter}</text>
  </AppIcon>
);

const APPS: { name: string; icon: ReactNode; open?: boolean; focused?: boolean }[] = [
  { name: "Microsoft Edge", icon: <FaEdgeLegacy className="size-[22px] text-[#0a7bd6]" /> },
  {
    name: "File Explorer", open: true,
    icon: (
      <AppIcon>
        <path d="M2 3h8l1.500 2H22v16H2z" fill="#e8b84a" />
        <path d="M2 7h21v14H2z" fill="#fbe08e" />
        <path d="M6 14q0-1 1-1h11q1 0 1 1v8h-3v-5h-7v5H6z" fill="#4ab4de" />
      </AppIcon>
    ),
  },
  {
    name: "Google Chrome", open: true,
    icon: (
      <AppIcon>
        <circle cx="12" cy="12" r="11" fill="#fbc116" />
        <path d="M12 12L2.500 6.500A11 11 0 0 1 21.800 7H12z" fill="#e33b2e" />
        <path d="M2.500 6.500A11 11 0 0 0 11 23l4.500-8.500L12 12z" fill="#2da94f" />
        <path d="M2.500 6.500l5 8L12 7h9.800A11 11 0 0 0 2.500 6.500" fill="#e33b2e" />
        <circle cx="12" cy="12" r="5.200" fill="#fff" />
        <circle cx="12" cy="12" r="4.200" fill="#4688f4" />
      </AppIcon>
    ),
  },
  {
    name: "Firefox",
    icon: (
      <AppIcon>
        <circle cx="13" cy="11" r="10" fill="#1d6fc0" />
        <path d="M8 5q3-4 8-3-3 1-2 3 3 1 1 3l-4 1z" fill="#6cc5f2" />
        <path d="M1.500 7q1 1 3 0 1-2 3-3-1 3 1 4 3 0 4 2-2 1-3 3 1 3 5 2 4-1 4-5 0-5-3-7 8 2 7.500 10A11 11 0 0 1 12 23 11 11 0 0 1 1.500 7" fill="#ee6a1f" />
        <path d="M20 5q3 3 2.500 8T17 21q4-5 3-10z" fill="#fbc12d" />
      </AppIcon>
    ),
  },
  { name: "Excel", icon: <OfficeIcon letter="X" color="#1f8b3b" light="#9fd38c" /> },
  { name: "Word", icon: <OfficeIcon letter="W" color="#1c57b0" light="#8fb6ea" /> },
  { name: "Outlook", icon: <OfficeIcon letter="O" color="#e09a12" light="#f8d878" /> },
  {
    name: "NinjaTrader", open: true, focused: true,
    icon: (
      <AppIcon>
        <path d="M1 17Q2 8 8 6q5 0 7 6l1 5h-2q-2-8-6-8-4 1-5 8z" fill="#7d7878" />
        <path d="M11 7q4 0 5 9 4-2 4-9 4 2 2.500 6-2.500 5-6.500 5.500-4-1-5-11.500" fill="#b8232a" />
      </AppIcon>
    ),
  },
  {
    name: "Splashtop Business",
    icon: (
      <AppIcon>
        <rect x="1" y="0" width="22" height="23" rx="3" fill="#6a38b8" />
        <path d="M7 3q4 0 5 4.500Q14 5 17 5q2 .5 1 3-1.500 2-5 2.500 4 1 4.500 4-.5 2-2.500 1-2-1-3-4-2 4-5 4-2-.500-1-2.500 1-2 4-3-4-2-3-7" fill="#fff" />
        <text x="12" y="21.500" textAnchor="middle" fontSize="5" fill="#ddd" className="font-['Liberation_Sans',sans-serif]">business</text>
      </AppIcon>
    ),
  },
  {
    name: "Shield",
    icon: (
      <AppIcon>
        <path d="M3 1q9-2 18 0v11q-1 8-9 12-8-4-9-12z" fill="#e8b840" />
        <path d="M3 1q5-1 9-1v12H3zM12 12h9q-1 8-9 12z" fill="#5f86b8" />
        <path d="M12 4v16M6 10h12" stroke="#8a4a2c" strokeWidth="2.500" />
        <path d="M12 5v14M7 10h10" stroke="#e8d8b0" strokeWidth=".8" />
      </AppIcon>
    ),
  },
  { name: "Steam", icon: <FaSteam className="size-[22px] rounded-full bg-white text-[#1a4a78]" /> },
  {
    name: "Paint", open: true,
    icon: (
      <AppIcon>
        <path d="M1 15Q1 6 12 5q9 0 9 7-1 4-5 4-2 2 0 4-3 3-8 2-7-1-7-7" fill="#cfe6f4" stroke="#7fa8c4" strokeWidth=".6" />
        <circle cx="5" cy="14" r="2" fill="#e04a3c" />
        <circle cx="8" cy="9.500" r="2" fill="#f0a020" />
        <circle cx="13.500" cy="8.500" r="2" fill="#4cb81c" />
        <circle cx="11" cy="16" r="2.200" fill="#111" />
        <path d="M21 5l-4 12-2 6-1-6 5-13z" fill="#d88a3a" />
        <path d="M19 4q0-3 4-3 0 4-2.500 4.500z" fill="#b06a2c" />
      </AppIcon>
    ),
  },
];

function Taskbar() {
  return (
    <footer className="absolute inset-x-0 bottom-0 z-20 flex h-10 items-stretch bg-black text-white">
      <button type="button" aria-label="Start" className="flex w-12 items-center justify-center">
        <FaWindows className="size-[17px]" />
      </button>
      <div className="flex w-[344px] items-center bg-[#333] pl-[9px] pr-3.5">
        <span className="size-[22px] shrink-0 rounded-full border-[3px] border-white" />
        <input
          type="text"
          aria-label="Ask me anything"
          placeholder="Ask me anything"
          className="ml-1.5 min-w-0 flex-1 bg-transparent text-sm outline-none placeholder:text-[#9a9a9a]"
        />
        <svg viewBox="0 0 12 18" className="h-[18px] w-3" fill="none" stroke="#aaa" aria-hidden="true">
          <rect x="3.500" y="1" width="5" height="10" />
          <path d="M.5 8v5h11V8M6 13v4M3 16.500h6" />
        </svg>
      </div>
      <button type="button" aria-label="Task view" className="flex w-[50px] items-center justify-center">
        <svg viewBox="0 0 20 14" className="h-3.5 w-5" fill="none" stroke="#fff">
          <rect x="4.500" y=".5" width="11" height="13" />
          <path d="M3 2.500H.5v9H3M17 2.500h2.500v9H17" />
        </svg>
      </button>
      <nav className="flex">
        {APPS.map((app) => (
          <button
            key={app.name}
            type="button"
            aria-label={app.name}
            className={`relative flex w-[49px] items-center justify-center ${app.focused ? "bg-[#333]" : ""}`}
          >
            {app.icon}
            {app.open && (
              <span className={`absolute bottom-0 h-0.5 bg-[#76b9ed] ${app.focused ? "inset-x-0" : "inset-x-1"}`} />
            )}
          </button>
        ))}
      </nav>
      <div className="ml-auto flex items-center">
        <svg viewBox="0 0 12 7" className="h-[7px] w-3" fill="none" stroke="#fff" aria-hidden="true">
          <path d="M.5 6.500L6 1l5.500 5.500" strokeWidth="1.300" />
        </svg>
        <svg viewBox="0 0 16 14" className="ml-2.5 h-3.5 w-4" fill="none" stroke="#fff" aria-hidden="true">
          <path d="M4.500 2.500h11v8h-11zM7 13.500h6M10 10.500v3" />
          <path d="M.5.500h4v4h-4zM2.500 4.500v6h2" fill="#000" />
        </svg>
        <svg viewBox="0 0 17 14" className="ml-2 h-3.5 w-[17px]" fill="none" stroke="#fff" aria-hidden="true">
          <path d="M.5 5h2.500l3.500-3.500v11L3 9H.5z" />
          <path d="M8.500 5q1.500 2 0 4" />
          <path d="M10.500 3q3 4 0 8M13 1q4.500 6 0 12" stroke="#888" />
        </svg>
        <div className="ml-2.5 w-[54px] text-center text-xs leading-[18px] whitespace-nowrap">
          <div>10:43 AM</div>
          <div>3/23/2017</div>
        </div>
        <button type="button" aria-label="Notifications" className="relative ml-3.5 size-7">
          <svg viewBox="0 0 16 16" className="absolute top-1.5 left-0.5 size-4">
            <path d="M0 0h16v12H8l-4 4v-4H0z" fill="#fff" />
            <path d="M3 3.500h10M3 6h10M3 8.500h7" stroke="#000" />
          </svg>
          <span className="absolute right-0.5 -bottom-1 flex size-4 items-center justify-center rounded-full border border-[#777] bg-[#333] text-[10px] font-bold">3</span>
        </button>
        <span className="ml-3 mr-1 h-10 w-px bg-[#555]" />
      </div>
    </footer>
  );
}

export default function App() {
  return (
    <main className="relative h-screen w-full overflow-hidden bg-black font-['Segoe_UI','Open_Sans',sans-serif]">
      {WINDOWS.map((win) => (
        <ChartPanel key={win.name} win={win} />
      ))}
      {/* bottom edge of a window that sits behind the others */}
      <div className="absolute right-px bottom-[41px] flex h-[7px] w-[375px] bg-[#dcdcdc]">
        <span className="h-1 w-[181px] border-b border-l border-[#7fbf7f] bg-[#e6f2e6]" />
      </div>
      <Taskbar />
    </main>
  );
}
